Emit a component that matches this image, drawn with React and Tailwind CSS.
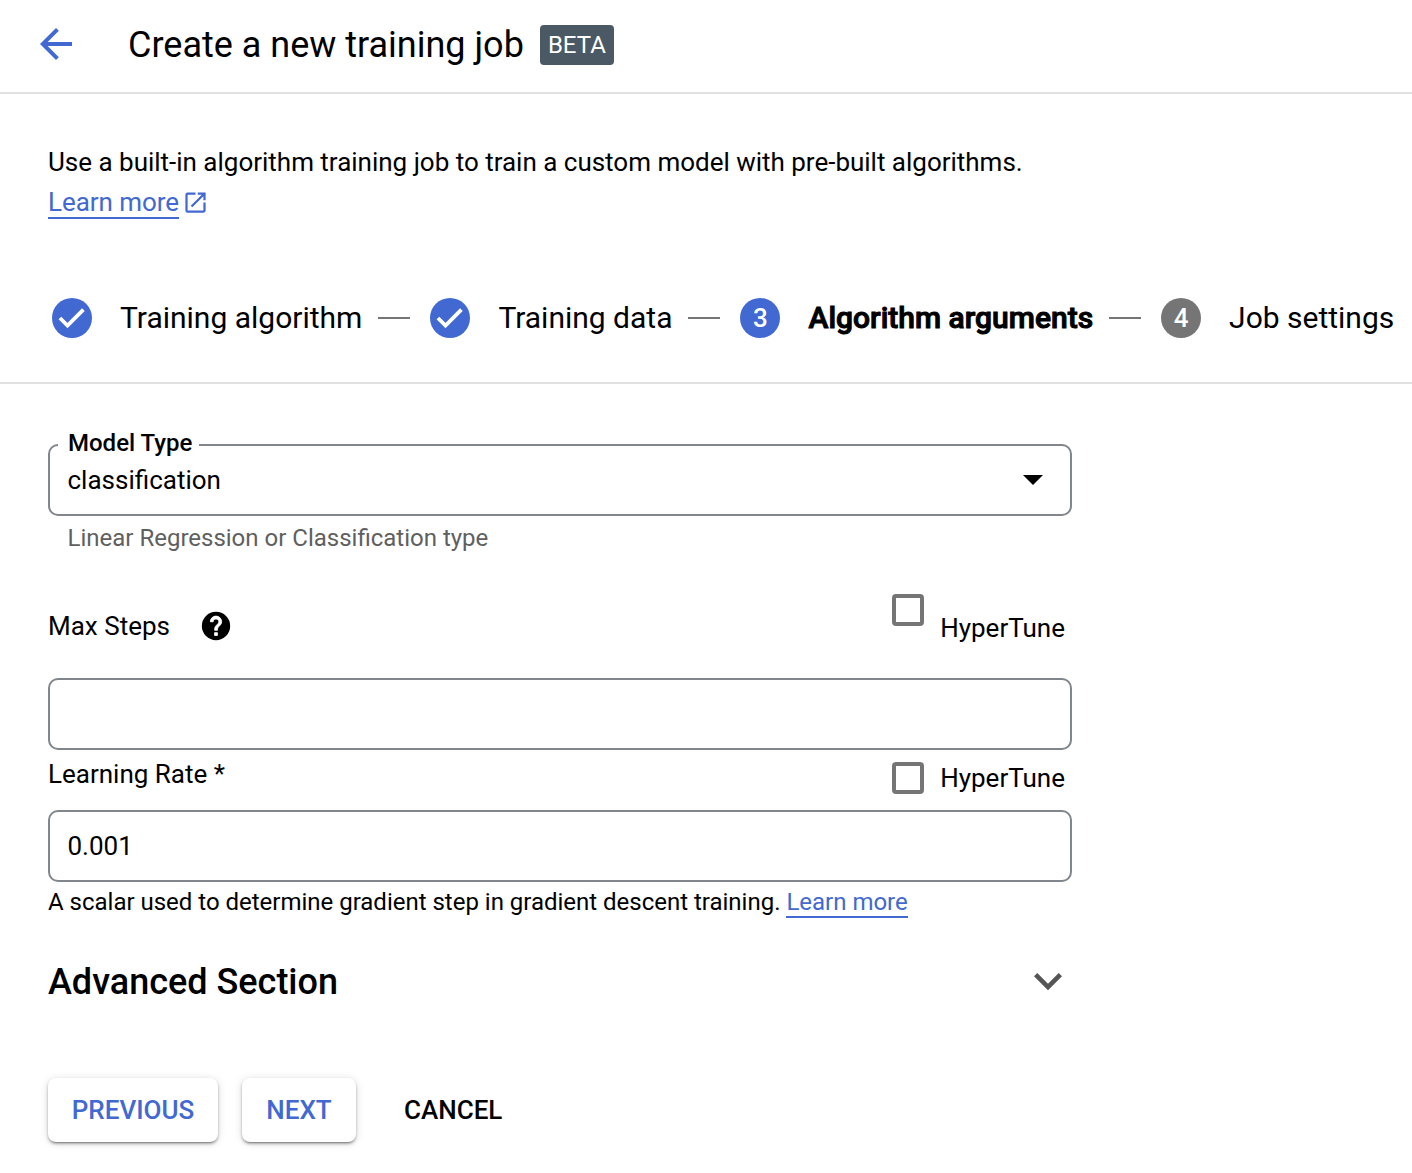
import { MdArrowBack, MdArrowDropDown, MdExpandMore, MdOpenInNew } from "react-icons/md";

function CheckMark() {
  return (
    <svg viewBox="0 0 40 40" className="size-10" fill="none" stroke="currentColor" strokeWidth="3.8">
      <path d="M7.9 20l7.6 7.6L31.4 11.7" />
    </svg>
  );
}

function HelpIcon({ className }) {
  return (
    <svg viewBox="0 0 24 24" className={className}>
      <circle cx="12" cy="12" r="10" fill="black" />
      <path
        fill="white"
        stroke="white"
        strokeWidth="0.6"
        d="M13 18.7h-2v-2h2v2zm2.07-7.45l-.9.92C13.45 12.9 13 13.5 13 15h-2v-.5c0-1.1.45-2.1 1.17-2.83l1.24-1.26c.37-.36.59-.86.59-1.41 0-1.1-.9-2-2-2s-2 .9-2 2H8c0-2.21 1.79-4 4-4s4 1.79 4 4c0 .88-.36 1.68-.93 2.25z"
      />
    </svg>
  );
}

function Step({ number, label, done, active, last }) {
  return (
    <li className="flex shrink-0 items-center">
      <span
        className={
          "flex size-10 shrink-0 items-center justify-center rounded-full text-[26px] font-medium text-white " +
          (done || active ? "bg-[#4169d1]" : "bg-[#757575]")
        }
      >
        {done ? <CheckMark /> : number}
      </span>
      <span
        className={
          "ml-7 whitespace-nowrap text-[30px] leading-10 " + (active ? "font-medium [-webkit-text-stroke:1px_black]" : "")
        }
      >
        {label}
      </span>
      {!last && <span className="ml-4 mr-5 h-0.5 w-8 bg-[#757575]" />}
    </li>
  );
}

function HyperTune({ className, boxClass }) {
  return (
    <label className={"flex gap-4 pr-[7px] " + className}>
      <span className={"size-8 rounded-[4px] border-4 border-[#757575] " + boxClass} />
      <span className="leading-10">HyperTune</span>
    </label>
  );
}

export default function App() {
  return (
    <div className="h-[1173px] w-[1412px] overflow-hidden bg-white font-['Roboto',sans-serif] text-[26px] text-black">
      <header className="flex h-[94px] items-center border-b-2 border-[#e0e0e0] pb-1 pl-8">
        <MdArrowBack className="size-12 text-[#4169d1]" />
        <h1 className="mt-0.5 ml-12 text-[36px] leading-10">Create a new training job</h1>
        <span className="mt-0.5 ml-4 flex h-10 w-[74px] items-center justify-center rounded-[4px] bg-[#4a5963] text-[24px] text-white">
          BETA
        </span>
      </header>

      <section className="h-[290px] border-b-2 border-[#e0e0e0] pt-12 pl-12">
        <p className="leading-10 tracking-[-0.01px]">
          Use a built-in algorithm training job to train a custom model with pre-built algorithms.
        </p>
        <div className="flex h-10 items-center text-[#4169d1]">
          <a className="mt-0.5 border-b-2 border-[#4169d1] leading-[30px] tracking-[-0.05px]">Learn more</a>
          <MdOpenInNew className="ml-[3px] size-[27px]" />
        </div>
        <ol className="mt-[76px] flex pl-1">
          <Step done label="Training algorithm" />
          <Step done label="Training data" />
          <Step active number={3} label="Algorithm arguments" />
          <Step last number={4} label="Job settings" />
        </ol>
      </section>

      <main className="w-[1072px] pt-[60px] pl-12">
        <div className="relative flex h-[72px] items-center justify-between rounded-[10px] border-2 border-[#80868b] pr-[13px] pl-[17.5px]">
          <span className="absolute -top-[17px] left-2 bg-white pr-[7px] pl-[10px] text-[24px] leading-7 font-medium">
            Model Type
          </span>
          <span>classification</span>
          <MdArrowDropDown className="mb-0.5 size-12" />
        </div>
        <p className="mt-[6px] ml-[19.5px] text-[24px] leading-8 text-[#5f5f5f]">Linear Regression or Classification type</p>

        <div className="mt-10 flex h-[84px] justify-between">
          <div className="flex h-16 items-center">
            <span>Max Steps</span>
            <HelpIcon className="ml-[29px] size-[34px]" />
          </div>
          <HyperTune className="pt-[14px]" boxClass="-mt-[14px]" />
        </div>
        <div className="h-[72px] rounded-[10px] border-2 border-[#80868b]" />
        <div className="flex h-[60px] justify-between pt-1">
          <span className="leading-10">Learning Rate *</span>
          <HyperTune className="pt-1" boxClass="mt-1" />
        </div>
        <div className="flex h-[72px] items-center rounded-[10px] border-2 border-[#80868b] pl-[17.5px]">0.001</div>
        <p className="mt-1 text-[24px] leading-8 tracking-[-0.01px]">
          A scalar used to determine gradient step in gradient descent training.{" "}
          <a className="border-b-2 border-[#4169d1] text-[#4169d1]">Learn more</a>
        </p>

        <div className="mt-[35px] flex h-14 items-center justify-between">
          <h2 className="mt-0.5 text-[36px] font-medium">Advanced Section</h2>
          <MdExpandMore className="-mr-1 size-14 text-[#555]" />
        </div>

        <div className="mt-[69px] flex gap-6 font-medium">
          <button className="h-16 w-[170px] rounded-lg text-[#4169d1] shadow-[0_3px_1px_-2px_rgba(0,0,0,0.2),0_2px_3px_rgba(0,0,0,0.3),0_1px_10px_rgba(0,0,0,0.12)]">
            PREVIOUS
          </button>
          <button className="h-16 w-[114px] rounded-lg text-[#4169d1] shadow-[0_3px_1px_-2px_rgba(0,0,0,0.2),0_2px_3px_rgba(0,0,0,0.3),0_1px_10px_rgba(0,0,0,0.12)]">
            NEXT
          </button>
          <button className="h-16 px-6">CANCEL</button>
        </div>
      </main>
    </div>
  );
}
